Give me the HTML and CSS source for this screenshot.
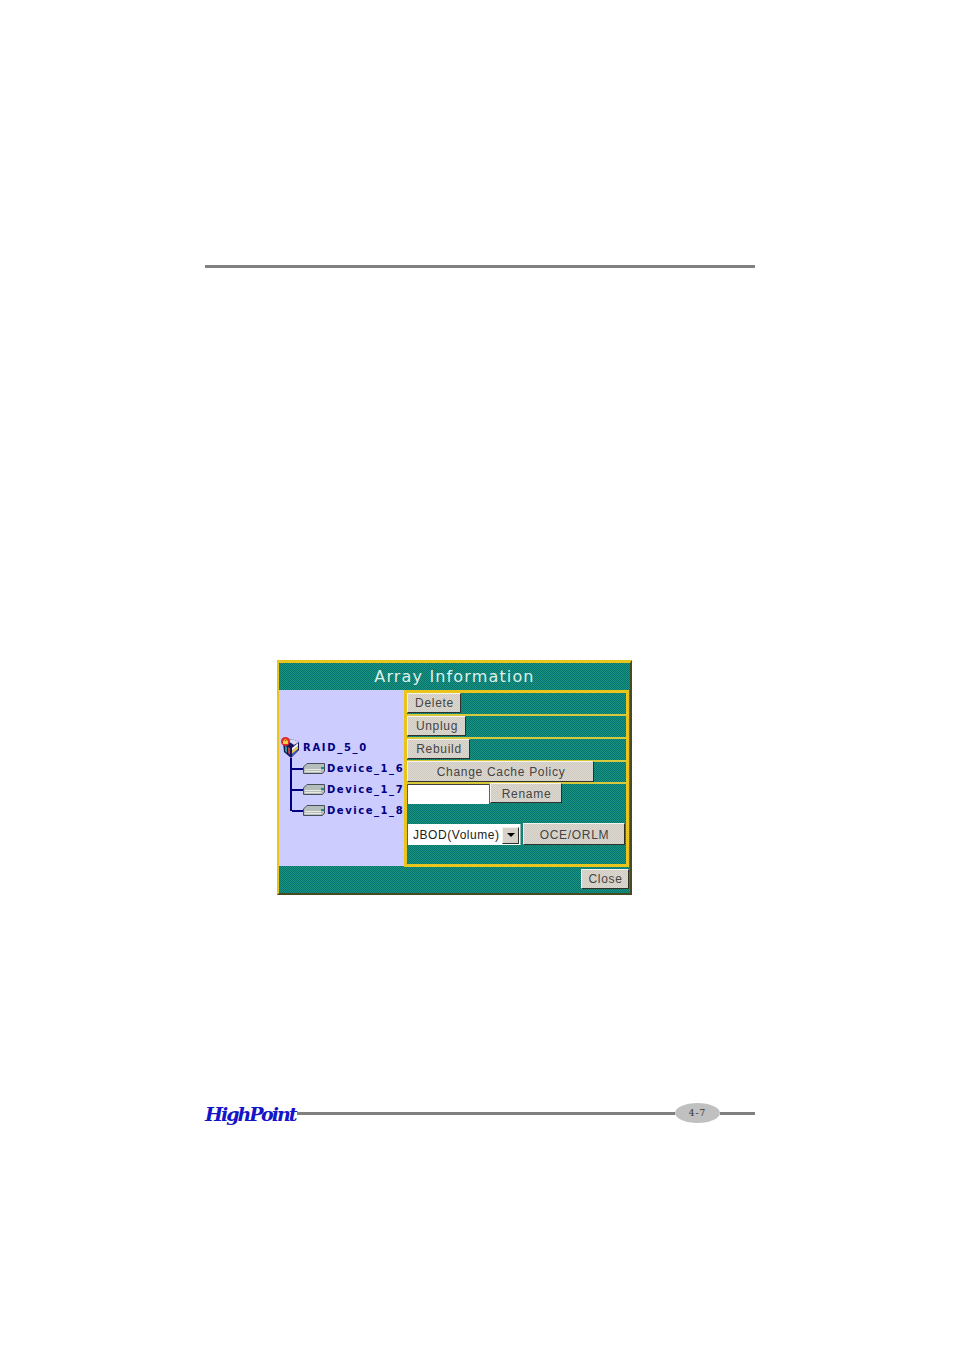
FILE: index.html
```html
<!DOCTYPE html>
<html>
    <head>
        <meta charset="utf-8">
        <title>Array Information</title>
        <link rel="stylesheet" href="styles.css">
    </head>
    <body>
        <div class="page">
            <div class="rule"></div>

            <div class="dialog">
                <h1 class="title">Array Information</h1>
                <div class="main">
                    <div class="tree">
                        <div class="raid">
                            <svg class="raid-icon" width="18" height="21" viewBox="0 0 18 21">
                                <path d="M2 5 L11 2 L18 5 L18 13 L10 21 L3 15 Z" fill="#14145c"/>
                                <path d="M7 4 L11 2 L18 5 L13 8 Z" fill="#d8d8f0"/>
                                <path d="M4 9 L6 10 L6 16 L4 14 Z" fill="#2a9a9a"/>
                                <path d="M7 10 L9 11 L9 18 L7 16 Z" fill="#c04040"/>
                                <path d="M11 11 L17 6 L17 9 L11 14 Z" fill="#f0f0f0"/>
                                <path d="M11 14 L17 9 L17 12 L11 17 Z" fill="#e8d040"/>
                                <path d="M11 17 L17 12 L17 13 L11 20 Z" fill="#4858d8"/>
                                <circle cx="4.5" cy="4.5" r="4.5" fill="#e02828"/>
                                <path d="M3 4 A1.5 1.5 0 0 1 6 4" fill="none" stroke="#f0d040"/>
                                <rect x="2" y="4" width="5" height="3" fill="#f0d040"/>
                            </svg>
                            <span class="raid-name">RAID_5_0</span>
                        </div>
                        <ul class="devices">
                            <li class="device">
                                <svg class="drive" width="22" height="11" viewBox="0 0 22 11">
                                    <path d="M4 0.5 L21.5 0.5 L21.5 8 L19.5 10.5 L0.5 10.5 L0.5 4 Z" fill="#b4bcbc" stroke="#46505a"/>
                                    <path d="M2 6.5 L18 6.5 M2 8.5 L18 8.5" stroke="#eceae0"/>
                                    <rect x="18" y="4" width="3" height="2" fill="#208888"/>
                                </svg>
                                <span>Device_1_6</span>
                            </li>
                            <li class="device">
                                <svg class="drive" width="22" height="11" viewBox="0 0 22 11">
                                    <path d="M4 0.5 L21.5 0.5 L21.5 8 L19.5 10.5 L0.5 10.5 L0.5 4 Z" fill="#b4bcbc" stroke="#46505a"/>
                                    <path d="M2 6.5 L18 6.5 M2 8.5 L18 8.5" stroke="#eceae0"/>
                                    <rect x="18" y="4" width="3" height="2" fill="#208888"/>
                                </svg>
                                <span>Device_1_7</span>
                            </li>
                            <li class="device">
                                <svg class="drive" width="22" height="11" viewBox="0 0 22 11">
                                    <path d="M4 0.5 L21.5 0.5 L21.5 8 L19.5 10.5 L0.5 10.5 L0.5 4 Z" fill="#b4bcbc" stroke="#46505a"/>
                                    <path d="M2 6.5 L18 6.5 M2 8.5 L18 8.5" stroke="#eceae0"/>
                                    <rect x="18" y="4" width="3" height="2" fill="#208888"/>
                                </svg>
                                <span>Device_1_8</span>
                            </li>
                        </ul>
                    </div>

                    <div class="panel">
                        <div class="row"><button type="button" class="btn btn-delete">Delete</button></div>
                        <div class="row"><button type="button" class="btn btn-unplug">Unplug</button></div>
                        <div class="row"><button type="button" class="btn btn-rebuild">Rebuild</button></div>
                        <div class="row"><button type="button" class="btn btn-cache">Change Cache Policy</button></div>
                        <div class="options">
                            <div class="rename">
                                <input type="text" class="name-input">
                                <button type="button" class="btn btn-rename">Rename</button>
                            </div>
                            <div class="level">
                                <div class="select">
                                    <span>JBOD(Volume)</span>
                                    <span class="arrow"></span>
                                </div>
                                <button type="button" class="btn btn-oce">OCE/ORLM</button>
                            </div>
                        </div>
                    </div>
                </div>
                <div class="bottom">
                    <button type="button" class="btn btn-close">Close</button>
                </div>
            </div>

            <div class="footer">
                <span class="logo">HighPoint</span>
                <div class="line"></div>
                <span class="page-num">4-7</span>
                <div class="line line-end"></div>
            </div>
        </div>
    </body>
</html>
```

FILE: styles.css
```css
body{
    margin: 0;
    background-color: white;
    font-family: "Liberation Sans", Arial, sans-serif;
}

.page{
    width: 550px;
    padding: 265px 0 0 205px;
}

.rule{
    height: 3px;
    background-color: #808080;
}

.dialog{
    width: 351px;
    margin: 392px 0 0 72px;
    border-style: solid;
    border-color: #e8c41c #4a4a20 #4a4a20 #e8c41c;
    border-width: 3px 2px 2px 2px;
    background-color: #008080;
    background-image: repeating-conic-gradient(#20907f 0 25%, #007670 0 50%);
    background-size: 2px 2px;
}

.title{
    margin: 0;
    height: 27px;
    line-height: 28px;
    text-align: center;
    color: #dff0ea;
    font-family: "DejaVu Sans", sans-serif;
    font-size: 16px;
    font-weight: normal;
    letter-spacing: 1.15px;
}

.main{
    display: flex;
    height: 177px;
}

.tree{
    width: 125px;
    height: 176px;
    background-color: #ccccff;
    color: #000080;
    font-family: "DejaVu Sans", sans-serif;
    font-weight: bold;
    font-size: 10px;
    letter-spacing: 1.55px;
    white-space: nowrap;
    overflow: hidden;
}

.raid{
    display: flex;
    align-items: center;
    height: 21px;
    margin-top: 47px;
    padding-left: 2px;
}

.raid-icon{
    margin-right: 4px;
}

.raid-name{
    letter-spacing: 1.7px;
}

.devices{
    list-style: none;
    margin: -1px 0 0 11px;
    padding: 0;
    border-left: 2px solid #000080;
    height: 53px;
}

.device{
    display: flex;
    align-items: center;
    height: 21px;
    padding-left: 11px;
    position: relative;
}

.device:first-child{
    margin-top: 1px;
}

.device::before{
    content: "";
    position: absolute;
    left: 0;
    top: 10px;
    width: 11px;
    height: 2px;
    background-color: #000080;
}

.drive{
    flex: none;
    margin-right: 2px;
}

.panel{
    width: 219px;
    border: 3px solid #e8c41c;
}

.row{
    height: 21px;
    border-bottom: 2px solid #d8c83c;
}

.btn{
    display: block;
    height: 20px;
    padding: 0 0 0 1px;
    box-sizing: border-box;
    border: 1px solid;
    border-color: #f4f4ec #30302c #30302c #f4f4ec;
    background-color: #d6d2ca;
    background-image: repeating-conic-gradient(#dedad2 0 25%, #cec9c0 0 50%);
    background-size: 2px 2px;
    color: #444;
    font-family: "Liberation Sans", Arial, sans-serif;
    font-size: 12px;
    letter-spacing: 0.7px;
}

.btn-delete{
    width: 54px;
}

.btn-unplug{
    width: 59px;
}

.btn-rebuild{
    width: 63px;
}

.btn-cache{
    width: 187px;
    height: 21px;
    margin-top: -1px;
}

.rename{
    display: flex;
}

.name-input{
    width: 81px;
    height: 20px;
    box-sizing: border-box;
    margin: 0 1px;
    padding: 0;
    border: none;
    border-top: 1px solid #404040;
    background-color: white;
}

.btn-rename{
    width: 72px;
    margin-top: -1px;
    padding-top: 2px;
}

.level{
    display: flex;
    margin-top: 20px;
    margin-left: 1px;
}

.select{
    display: flex;
    align-items: center;
    justify-content: space-between;
    width: 113px;
    height: 21px;
    box-sizing: border-box;
    padding: 1px 1px 0 5px;
    margin-right: 2px;
    background-color: white;
    border-right: 1px solid #90b8b0;
    color: #222;
    font-size: 12px;
    letter-spacing: 0.55px;
}

.arrow{
    display: flex;
    align-items: center;
    justify-content: center;
    width: 17px;
    height: 17px;
    box-sizing: border-box;
    border: 1px solid;
    border-color: #f4f4ec #30302c #30302c #f4f4ec;
    background-color: #d6d2ca;
}

.arrow::after{
    content: "";
    border-style: solid;
    border-width: 4px 4px 0 4px;
    border-color: black transparent transparent transparent;
}

.btn-oce{
    width: 102px;
    height: 22px;
    margin-top: -1px;
    padding-top: 2px;
}

.bottom{
    display: flex;
    justify-content: flex-end;
    height: 26px;
    padding: 2px 1px 0 0;
    box-sizing: border-box;
}

.btn-close{
    width: 48px;
}

.footer{
    display: flex;
    align-items: center;
    height: 24px;
    margin-top: 207px;
}

.logo{
    width: 92px;
    color: #1414c8;
    font-family: "DejaVu Serif", serif;
    font-size: 19px;
    font-style: italic;
    font-weight: bold;
    letter-spacing: -2px;
    white-space: nowrap;
}

.line{
    flex: 1;
    height: 3px;
    margin-top: -1px;
    background-color: #808080;
}

.line-end{
    flex: none;
    width: 35px;
}

.page-num{
    width: 45px;
    height: 20px;
    margin-top: -2px;
    border-radius: 50%;
    background-color: #c0c0c0;
    color: #333;
    font-family: "DejaVu Serif", serif;
    font-size: 9px;
    letter-spacing: 1px;
    line-height: 20px;
    text-align: center;
}
```
